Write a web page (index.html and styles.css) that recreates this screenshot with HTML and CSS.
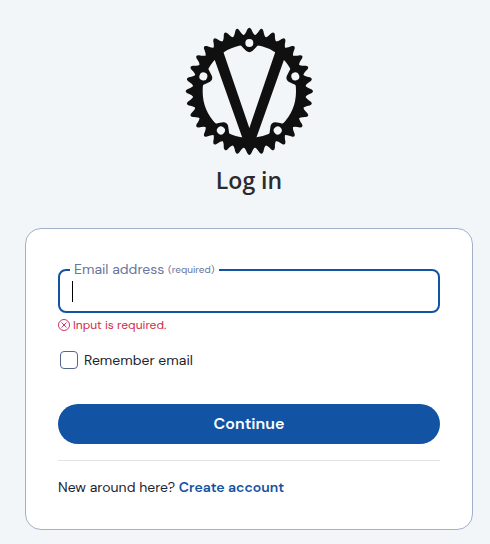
FILE: index.html
```
<!DOCTYPE html>
<html lang="en">
<head>
    <meta charset="UTF-8">
    <meta name="viewport" content="width=device-width, initial-scale=1.0">
    <title>Log in</title>
    <link rel="stylesheet" href="styles.css">
</head>
<body>
    <main class="login">
        <!-- Chainring logo -->
        <svg class="logo" viewBox="-193 -193 384 384" role="img" aria-label="Chainring logo">
            <defs>
                <path id="tooth" d="M-21,-162 L-19,-167 Q-12,-170 -6,-186 Q0,-196 6,-186 Q12,-170 19,-167 L21,-162 Z"/>
                <g id="teeth">
                    <use href="#tooth"/>
                    <use href="#tooth" transform="rotate(11.25)"/>
                    <use href="#tooth" transform="rotate(22.5)"/>
                    <use href="#tooth" transform="rotate(33.75)"/>
                </g>
                <g id="bolt">
                    <path d="M-32,-142 Q-23,-137 -19,-131 L-9,-121 Q0,-114 9,-121 L19,-131 Q23,-137 32,-142 Z"/>
                    <circle class="hole" cy="-145" r="12"/>
                </g>
            </defs>
            <circle class="ring" r="154"/>
            <use href="#teeth"/>
            <use href="#teeth" transform="rotate(45)"/>
            <use href="#teeth" transform="rotate(90)"/>
            <use href="#teeth" transform="rotate(135)"/>
            <use href="#teeth" transform="rotate(180)"/>
            <use href="#teeth" transform="rotate(225)"/>
            <use href="#teeth" transform="rotate(270)"/>
            <use href="#teeth" transform="rotate(315)"/>
            <path d="M-113,-120 L-82,-130 L0,110 L82,-130 L113,-120 L20,142 L-20,142 Z"/>
            <use href="#bolt"/>
            <use href="#bolt" transform="rotate(72)"/>
            <use href="#bolt" transform="rotate(144)"/>
            <use href="#bolt" transform="rotate(216)"/>
            <use href="#bolt" transform="rotate(288)"/>
        </svg>
        <h1>Log in</h1>

        <form class="card">
            <!-- Email Input -->
            <div class="field">
                <label for="email">Email address <small>(required)</small></label>
                <input type="email" id="email" name="email" aria-describedby="emailError" required>
                <span class="caret"></span>
            </div>
            <p class="error" id="emailError">
                <svg viewBox="0 0 12 12" aria-hidden="true">
                    <circle cx="6" cy="6" r="5.5"/>
                    <path d="M3.5,3.5 L8.5,8.5 M8.5,3.5 L3.5,8.5"/>
                </svg>
                Input is required.
            </p>

            <!-- Remember Email -->
            <div class="remember">
                <input type="checkbox" id="remember" name="remember">
                <label for="remember">Remember email</label>
            </div>

            <button class="submit-btn" type="submit">Continue</button>

            <p class="signup">New around here? <a href="#">Create account</a></p>
        </form>
    </main>
</body>
</html>
```
FILE: styles.css
```
* {
    box-sizing: border-box;
}
body {
    margin: 0;
    padding: 27px 17px 14px 25px;
    background-color: #f2f6f9;
    color: #1c2430;
    font-family: "DM Sans", Inter, sans-serif;
    font-size: 14px;
    line-height: 20px;
}
.login {
    max-width: 448px;
    margin: 0 auto;
}
.logo {
    display: block;
    width: 128px;
    height: 128px;
    margin: 0 auto;
    fill: #101010;
}
.ring {
    fill: none;
    stroke: #101010;
    stroke-width: 28;
}
.hole {
    fill: #f2f6f9;
}
h1 {
    margin: 9px 0 32px;
    color: #2b2b2e;
    font-family: "Open Sans", sans-serif;
    font-size: 23px;
    font-weight: 600;
    line-height: 32px;
    text-align: center;
}
.card {
    padding: 40px 32px 32px;
    background-color: #fff;
    border: 1px solid #a3b0ca;
    border-radius: 16px;
}
.field {
    position: relative;
}
.field input {
    display: block;
    width: 100%;
    height: 44px;
    padding: 0 12px;
    border: 2px solid #1253a4;
    border-radius: 8px;
    outline: none;
    background-color: #fff;
    font: inherit;
}
.field label {
    position: absolute;
    top: -10px;
    left: 12px;
    padding: 0 4px;
    background-color: #fff;
    color: #68759c;
}
.field small {
    font-size: 10px;
    vertical-align: 1px;
}
.caret {
    position: absolute;
    top: 12px;
    left: 14px;
    width: 1px;
    height: 21px;
    background-color: #000;
}
.error {
    display: flex;
    align-items: center;
    gap: 3px;
    margin: 4px 0 17px;
    color: #cf2a4a;
    font-size: 12px;
    line-height: 16px;
}
.error svg {
    width: 12px;
    height: 12px;
    fill: none;
    stroke: #c83a66;
}
.remember {
    display: flex;
    align-items: center;
    gap: 6px;
    margin-bottom: 34px;
    padding-left: 2px;
}
.remember input {
    appearance: none;
    width: 18px;
    height: 18px;
    margin: 0;
    border: 1px solid #56668f;
    border-radius: 4px;
    background-color: #fff;
}
.submit-btn {
    display: block;
    width: 100%;
    height: 40px;
    border: none;
    border-radius: 20px;
    background-color: #1253a4;
    color: #fff;
    cursor: pointer;
    font: inherit;
    font-size: 16px;
    font-weight: 600;
}
.signup {
    margin: 16px 0 0;
    padding-top: 16px;
    border-top: 1px solid #e1e3e6;
}
.signup a {
    color: #1253a4;
    font-weight: 600;
    text-decoration: none;
}
```
